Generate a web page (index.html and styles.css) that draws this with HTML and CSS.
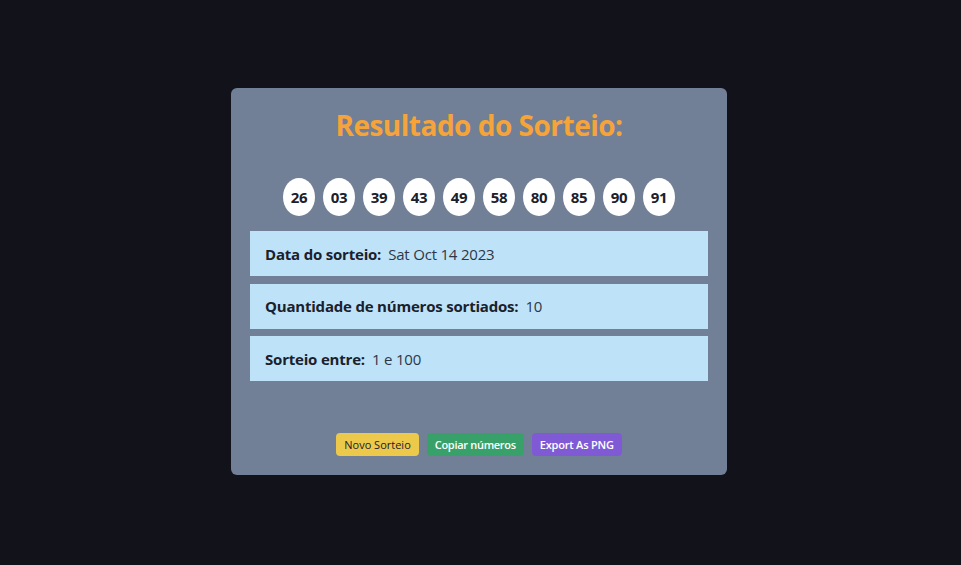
FILE: index.html
```html
<!DOCTYPE html>
<html lang="pt">
<head>
<meta charset="utf-8">
<title>Resultado do Sorteio</title>
<link rel="stylesheet" href="styles.css">
</head>
<body>
<main class="screen">
  <section class="card">
    <h1 class="title">Resultado do Sorteio:</h1>
    <div class="balls">
      <span class="ball">26</span>
      <span class="ball">03</span>
      <span class="ball">39</span>
      <span class="ball">43</span>
      <span class="ball">49</span>
      <span class="ball">58</span>
      <span class="ball">80</span>
      <span class="ball">85</span>
      <span class="ball">90</span>
      <span class="ball">91</span>
    </div>
    <div class="info">
      <div class="row"><span class="label">Data do sorteio:</span><span class="value">Sat Oct 14 2023</span></div>
      <div class="row"><span class="label">Quantidade de números sortiados:</span><span class="value">10</span></div>
      <div class="row"><span class="label">Sorteio entre:</span><span class="value">1 e 100</span></div>
    </div>
    <div class="actions">
      <button class="btn btn-yellow">Novo Sorteio</button>
      <button class="btn btn-green">Copiar números</button>
      <button class="btn btn-purple">Export As PNG</button>
    </div>
  </section>
</main>
</body>
</html>
```

FILE: styles.css
```css
* { box-sizing: border-box; }
html, body { margin: 0; padding: 0; }
body {
  background: #12131a;
  font-family: "Open Sans", "Noto Sans", sans-serif;
  color: #1a202c;
}
.screen {
  height: 565px;
  display: flex;
  align-items: center;
  justify-content: center;
  padding-right: 3px;
  padding-bottom: 2px;
}
.card {
  width: 496px;
  height: 387px;
  background: #718096;
  border-radius: 6px;
  padding: 19px 19px 19px;
  display: flex;
  flex-direction: column;
}
.title {
  margin: 0;
  text-align: center;
  color: #f6a43a;
  font-size: 28px;
  line-height: 36px;
  font-weight: 700;
  letter-spacing: -0.5px;
}
.balls {
  margin-top: 35px;
  display: flex;
  justify-content: center;
  gap: 8px;
}
.ball {
  width: 32px;
  height: 38px;
  border-radius: 50%;
  background: #fff;
  display: flex;
  align-items: center;
  justify-content: center;
  font-weight: 700;
  font-size: 15px;
  color: #1a202c;
  letter-spacing: -0.3px;
}
.info {
  margin-top: 15px;
  display: flex;
  flex-direction: column;
  gap: 7.5px;
}
.row {
  height: 45px;
  background: #bee3f8;
  display: flex;
  align-items: center;
  padding: 0 15px;
  font-size: 15px;
}
.label {
  font-weight: 700;
  color: #1a202c;
  margin-right: 7px;
  letter-spacing: -0.2px;
}
.value {
  font-weight: 400;
  color: #2d3748;
  letter-spacing: -0.2px;
}
.actions {
  margin-top: auto;
  display: flex;
  justify-content: center;
  gap: 8px;
}
.btn {
  border: 0;
  border-radius: 4px;
  font-family: inherit;
  font-size: 11px;
  line-height: 15px;
  padding: 4px 8px;
  cursor: pointer;
}
.btn-yellow { background: #ecc94b; color: #1a202c; }
.btn-green { background: #38a169; color: #fff; font-weight: 600; letter-spacing: -0.3px; }
.btn-purple { background: #805ad5; color: #fff; font-weight: 600; letter-spacing: -0.2px; }
```
